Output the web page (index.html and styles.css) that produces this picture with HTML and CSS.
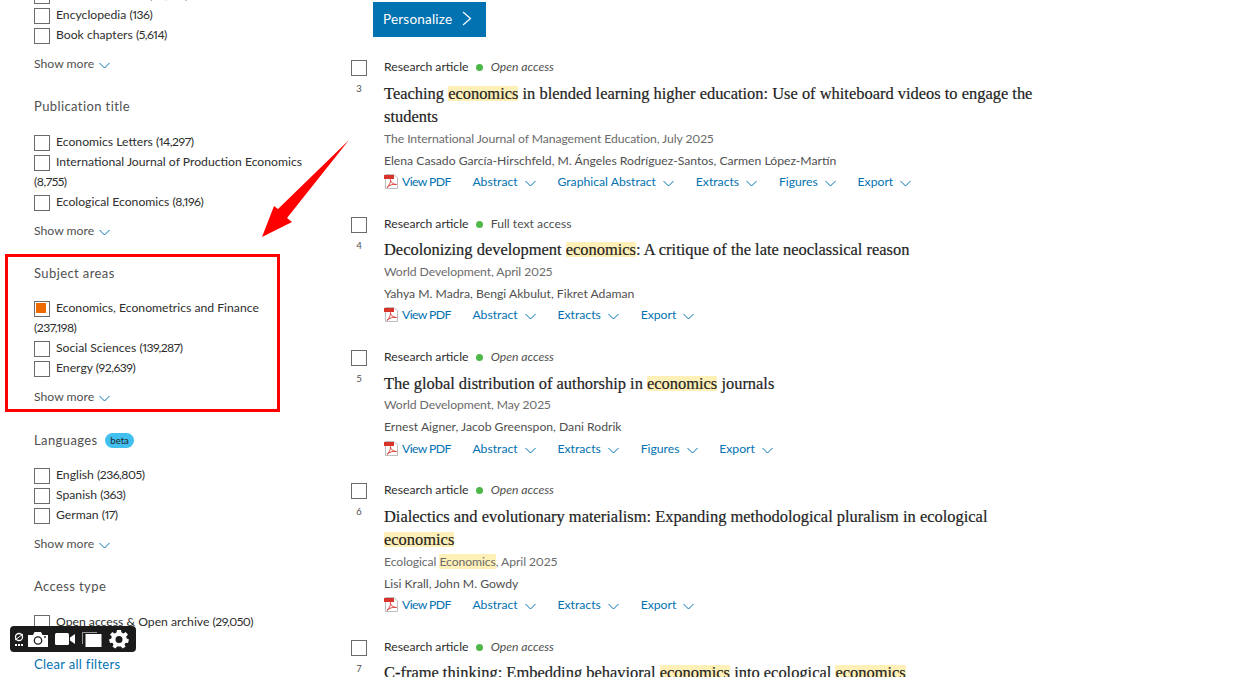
FILE: index.html
```html
<!DOCTYPE html>
<html>
  <head>
    <title>Search results</title>
    <link rel="stylesheet" href="styles.css">
  </head>
  <body>
    <svg class="defs" width="0" height="0">
      <symbol id="chev" viewBox="0 0 11 7"><path d="M.5 1 5.500 6 10.500 1" fill="none" stroke="currentColor" stroke-width="1"/></symbol>
      <symbol id="pdf" viewBox="0 0 14 15">
        <path d="M1.500.5H10L13.500 4V14.500H1.500Z" fill="#fff" stroke="#bdbdbd"/>
        <rect x="0" y="1" width="10" height="4" fill="#d8342c"/>
        <path d="M3 13.500C5 11.500 7 8 6.500 5.500 6.500 8 9 10.500 12.500 10.500 9 9.800 5 11 3 13.500Z" fill="none" stroke="#d8342c" stroke-width=".9"/>
      </symbol>
    </svg>

    <div class="page">
      <aside class="sidebar">
        <div class="filter-group">
          <div class="filter-rows">
            <label class="filter-row"><span class="box"></span>Research articles <span class="count">(84,120)</span></label>
            <label class="filter-row"><span class="box"></span>Encyclopedia <span class="count">(136)</span></label>
            <label class="filter-row"><span class="box"></span>Book chapters <span class="count">(5,614)</span></label>
          </div>
          <div class="show-more">Show more <svg class="chev"><use href="#chev"/></svg></div>
        </div>

        <div class="filter-group">
          <h3>Publication title</h3>
          <div class="filter-rows">
            <label class="filter-row"><span class="box"></span>Economics Letters <span class="count">(14,297)</span></label>
            <label class="filter-row"><span class="box"></span>International Journal of Production Economics <span class="count">(8,755)</span></label>
            <label class="filter-row"><span class="box"></span>Ecological Economics <span class="count">(8,196)</span></label>
          </div>
          <div class="show-more">Show more <svg class="chev"><use href="#chev"/></svg></div>
        </div>

        <div class="filter-group">
          <h3>Subject areas</h3>
          <div class="filter-rows">
            <label class="filter-row"><span class="box checked"></span>Economics, Econometrics and Finance <span class="count">(237,198)</span></label>
            <label class="filter-row"><span class="box"></span>Social Sciences <span class="count">(139,287)</span></label>
            <label class="filter-row"><span class="box"></span>Energy <span class="count">(92,639)</span></label>
          </div>
          <div class="show-more">Show more <svg class="chev"><use href="#chev"/></svg></div>
        </div>

        <div class="filter-group">
          <h3>Languages <span class="beta">beta</span></h3>
          <div class="filter-rows">
            <label class="filter-row"><span class="box"></span>English <span class="count">(236,805)</span></label>
            <label class="filter-row"><span class="box"></span>Spanish <span class="count">(363)</span></label>
            <label class="filter-row"><span class="box"></span>German <span class="count">(17)</span></label>
          </div>
          <div class="show-more">Show more <svg class="chev"><use href="#chev"/></svg></div>
        </div>

        <div class="filter-group">
          <h3>Access type</h3>
          <div class="filter-rows">
            <label class="filter-row"><span class="box"></span>Open access &amp; Open archive <span class="count">(29,050)</span></label>
          </div>
        </div>

        <a class="clear-all">Clear all filters</a>
      </aside>

      <main class="results">
        <button class="personalize">Personalize <svg viewBox="0 0 10 15"><path d="M1 1 8.500 7.500 1 14" fill="none" stroke="#fff" stroke-width="1.200"/></svg></button>

        <article class="result">
          <div class="result-side"><span class="box"></span><span class="num">3</span></div>
          <div class="result-body">
            <div class="meta">Research article <i class="dot"></i> <em>Open access</em></div>
            <h2>Teaching <mark>economics</mark> in blended learning higher education: Use of whiteboard videos to engage the students</h2>
            <div class="journal">The International Journal of Management Education, July 2025</div>
            <div class="authors">Elena Casado García-Hirschfeld, M. Ángeles Rodríguez-Santos, Carmen López-Martín</div>
            <div class="links">
              <a class="view-pdf"><svg class="pdf"><use href="#pdf"/></svg>View PDF</a>
              <a>Abstract <svg class="chev"><use href="#chev"/></svg></a>
              <a>Graphical Abstract <svg class="chev"><use href="#chev"/></svg></a>
              <a>Extracts <svg class="chev"><use href="#chev"/></svg></a>
              <a>Figures <svg class="chev"><use href="#chev"/></svg></a>
              <a>Export <svg class="chev"><use href="#chev"/></svg></a>
            </div>
          </div>
        </article>

        <article class="result">
          <div class="result-side"><span class="box"></span><span class="num">4</span></div>
          <div class="result-body">
            <div class="meta">Research article <i class="dot"></i> <span class="access">Full text access</span></div>
            <h2>Decolonizing development <mark>economics</mark>: A critique of the late neoclassical reason</h2>
            <div class="journal">World Development, April 2025</div>
            <div class="authors">Yahya M. Madra, Bengi Akbulut, Fikret Adaman</div>
            <div class="links">
              <a class="view-pdf"><svg class="pdf"><use href="#pdf"/></svg>View PDF</a>
              <a>Abstract <svg class="chev"><use href="#chev"/></svg></a>
              <a>Extracts <svg class="chev"><use href="#chev"/></svg></a>
              <a>Export <svg class="chev"><use href="#chev"/></svg></a>
            </div>
          </div>
        </article>

        <article class="result">
          <div class="result-side"><span class="box"></span><span class="num">5</span></div>
          <div class="result-body">
            <div class="meta">Research article <i class="dot"></i> <em>Open access</em></div>
            <h2>The global distribution of authorship in <mark>economics</mark> journals</h2>
            <div class="journal">World Development, May 2025</div>
            <div class="authors">Ernest Aigner, Jacob Greenspon, Dani Rodrik</div>
            <div class="links">
              <a class="view-pdf"><svg class="pdf"><use href="#pdf"/></svg>View PDF</a>
              <a>Abstract <svg class="chev"><use href="#chev"/></svg></a>
              <a>Extracts <svg class="chev"><use href="#chev"/></svg></a>
              <a>Figures <svg class="chev"><use href="#chev"/></svg></a>
              <a>Export <svg class="chev"><use href="#chev"/></svg></a>
            </div>
          </div>
        </article>

        <article class="result">
          <div class="result-side"><span class="box"></span><span class="num">6</span></div>
          <div class="result-body">
            <div class="meta">Research article <i class="dot"></i> <em>Open access</em></div>
            <h2>Dialectics and evolutionary materialism: Expanding methodological pluralism in ecological <mark>economics</mark></h2>
            <div class="journal">Ecological <mark>Economics</mark>, April 2025</div>
            <div class="authors">Lisi Krall, John M. Gowdy</div>
            <div class="links">
              <a class="view-pdf"><svg class="pdf"><use href="#pdf"/></svg>View PDF</a>
              <a>Abstract <svg class="chev"><use href="#chev"/></svg></a>
              <a>Extracts <svg class="chev"><use href="#chev"/></svg></a>
              <a>Export <svg class="chev"><use href="#chev"/></svg></a>
            </div>
          </div>
        </article>

        <article class="result">
          <div class="result-side"><span class="box"></span><span class="num">7</span></div>
          <div class="result-body">
            <div class="meta">Research article <i class="dot"></i> <em>Open access</em></div>
            <h2>C-frame thinking: Embedding behavioral <mark>economics</mark> into ecological <mark>economics</mark></h2>
          </div>
        </article>
      </main>
    </div>

    <!-- annotations on top of the screenshot -->
    <div class="red-box"></div>
    <svg class="red-arrow" viewBox="0 0 100 115"><polygon points="94,10 23,79 19,76 7,107 37,92 32,88" fill="#f00"/></svg>

    <div class="capture-bar">
      <span class="mini">
        <svg viewBox="0 0 10 10" width="10" height="10"><circle cx="5" cy="5" r="3.500" fill="none" stroke="#fff" stroke-width="1.300"/><path d="M1 8 9 2" stroke="#fff" stroke-width="1"/></svg>
        <i></i>
      </span>
      <svg width="20" height="15" viewBox="0 0 20 15"><path d="M0 3H5L6.500 0H13L14.500 3H20V15H0Z" fill="#fff"/><circle cx="10" cy="8.500" r="3.700" fill="none" stroke="#1b1b1b" stroke-width="1.300"/><circle cx="17" cy="5" r=".9" fill="#1b1b1b"/></svg>
      <svg width="20" height="12" viewBox="0 0 20 12"><rect width="14" height="12" rx="1.500" fill="#fff"/><path d="M15 4.500 20 1V11L15 7.500Z" fill="#fff"/></svg>
      <svg width="20" height="15" viewBox="0 0 20 15"><path d="M.5 12V.5H15" fill="none" stroke="#9a9a9a"/><rect x="3.500" y="2" width="16" height="13" fill="#fff"/></svg>
      <svg width="20" height="20" viewBox="0 0 20 20"><path d="M8 1H12L12.500 3.500 14.500 4.400 16.700 3 19 5.800 17.200 7.600 17.700 9.500 20 10.500 19 14 16.700 13.800 15.500 15.500 16.500 17.700 13.500 19.500 12 17.500H8L6.500 19.500 3.500 17.700 4.500 15.500 3.300 13.800 1 14 0 10.500 2.300 9.500 2.800 7.600 1 5.800 3.300 3 5.500 4.400 7.500 3.500Z" fill="#fff"/><circle cx="10" cy="10.500" r="3.500" fill="#1b1b1b"/></svg>
    </div>
  </body>
</html>
```

FILE: styles.css
```css
html, body {
  height: 677px;
  overflow: hidden;
}

body {
  margin: 0;
  font-family: "Lato", sans-serif;
  font-size: 12.2px;
  font-variant-numeric: proportional-nums;
  line-height: 20px;
  color: #2e2e2e;
  background: #fff;
}

.defs {
  display: block;
  height: 0;
}

.page {
  display: flex;
  margin-top: -15px;
}

/* Filters column */
.sidebar {
  flex: none;
  width: 351px;
  padding-left: 34px;
  box-sizing: border-box;
}

.filter-group h3 {
  margin: 22.4px 0 15.300px;
  font-size: 13px;
  font-weight: 400;
  line-height: 20px;
  letter-spacing: .4px;
  color: #505050;
}

.filter-rows {
  width: 269px;
}

.filter-row {
  display: block;
}

.count {
  letter-spacing: -.5px;
}

.box {
  display: inline-block;
  box-sizing: border-box;
  width: 16px;
  height: 16px;
  border: 1px solid #6b6b6b;
  background: #fff;
  vertical-align: -5px;
  margin-right: 6px;
}

.box.checked {
  padding: 1px 3px 3px 1px;
  background: #ec6a00 content-box;
}

.show-more {
  margin-top: 9px;
  color: #505050;
}

.chev {
  width: 11px;
  height: 7px;
  margin-left: 2px;
  color: #0272b1;
  vertical-align: -1px;
}

.beta {
  display: inline-block;
  height: 15px;
  margin-left: 4px;
  padding: 0 5px;
  border-radius: 8px;
  background: #41c0f0;
  color: #1f1f1f;
  font-size: 9.500px;
  line-height: 15px;
  vertical-align: 1px;
  letter-spacing: 0;
}

.clear-all {
  display: block;
  margin-top: 22px;
  font-size: 13px;
  letter-spacing: .3px;
  color: #0272b1;
}

/* Results column */
.results {
  flex: none;
  width: 700px;
  padding-top: 17px;
}

.personalize {
  display: flex;
  align-items: center;
  gap: 10px;
  height: 35px;
  margin: 0 0 20.200px 22px;
  padding: 0 14px 2px 10px;
  border: 0;
  background: #0272b1;
  color: #fff;
  font-family: inherit;
  font-size: 13.500px;
  letter-spacing: .2px;
}

.personalize svg {
  width: 10px;
  height: 15px;
}

.result {
  display: grid;
  grid-template-columns: 33px 660px;
  margin-bottom: 21.600px;
}

.result-side {
  display: flex;
  flex-direction: column;
  padding-top: 3px;
}

.result-side .box {
  margin: 0;
}

.num {
  width: 16px;
  margin-top: 3px;
  font-size: 9.500px;
  text-align: center;
  color: #505050;
}

.meta em,
.access {
  color: #505050;
}

.dot {
  display: inline-block;
  width: 7px;
  height: 7px;
  margin: 0 5px 0 4px;
  border-radius: 50%;
  background: #4db848;
}

h2 {
  margin: 4.600px 0 .9px;
  font-family: "Liberation Serif", serif;
  font-size: 16.450px;
  font-weight: 400;
  line-height: 23px;
  color: #1f1f1f;
  -webkit-text-stroke: .2px #1f1f1f;
}

mark {
  background: #fff0b8;
  color: inherit;
}

h2 mark {
  background: linear-gradient(transparent 2px, #fff0b8 2px, #fff0b8 calc(100% - 2px), transparent calc(100% - 2px));
}

.journal {
  letter-spacing: -.08px;
  color: #6b6b6b;
}

.authors {
  margin-top: 2px;
  color: #505050;
}

.links {
  display: flex;
  gap: 21.700px;
  margin-top: 1.300px;
  color: #0272b1;
}

.links .chev {
  margin-left: 4px;
}

.links .pdf {
  width: 14px;
  height: 15px;
  margin-right: 4px;
  vertical-align: -3px;
}

.view-pdf {
  letter-spacing: -.6px;
}

/* Annotations */
.red-box {
  position: absolute;
  left: 5px;
  top: 254px;
  width: 275px;
  height: 158px;
  box-sizing: border-box;
  border: 3px solid #f00;
}

.red-arrow {
  position: absolute;
  left: 255px;
  top: 130px;
  width: 100px;
  height: 115px;
}

.capture-bar {
  position: absolute;
  left: 10px;
  top: 626px;
  display: flex;
  align-items: center;
  gap: 7px;
  height: 26px;
  padding: 0 7px 0 4px;
  border-radius: 4px;
  background: #1b1b1b;
}

.mini {
  display: flex;
  flex-direction: column;
  align-items: center;
  gap: 2px;
  width: 10px;
  margin-right: -3px;
}

.mini i {
  width: 8px;
  height: 2px;
  background: repeating-linear-gradient(90deg, #fff 0 2px, transparent 2px 3px);
}
```
